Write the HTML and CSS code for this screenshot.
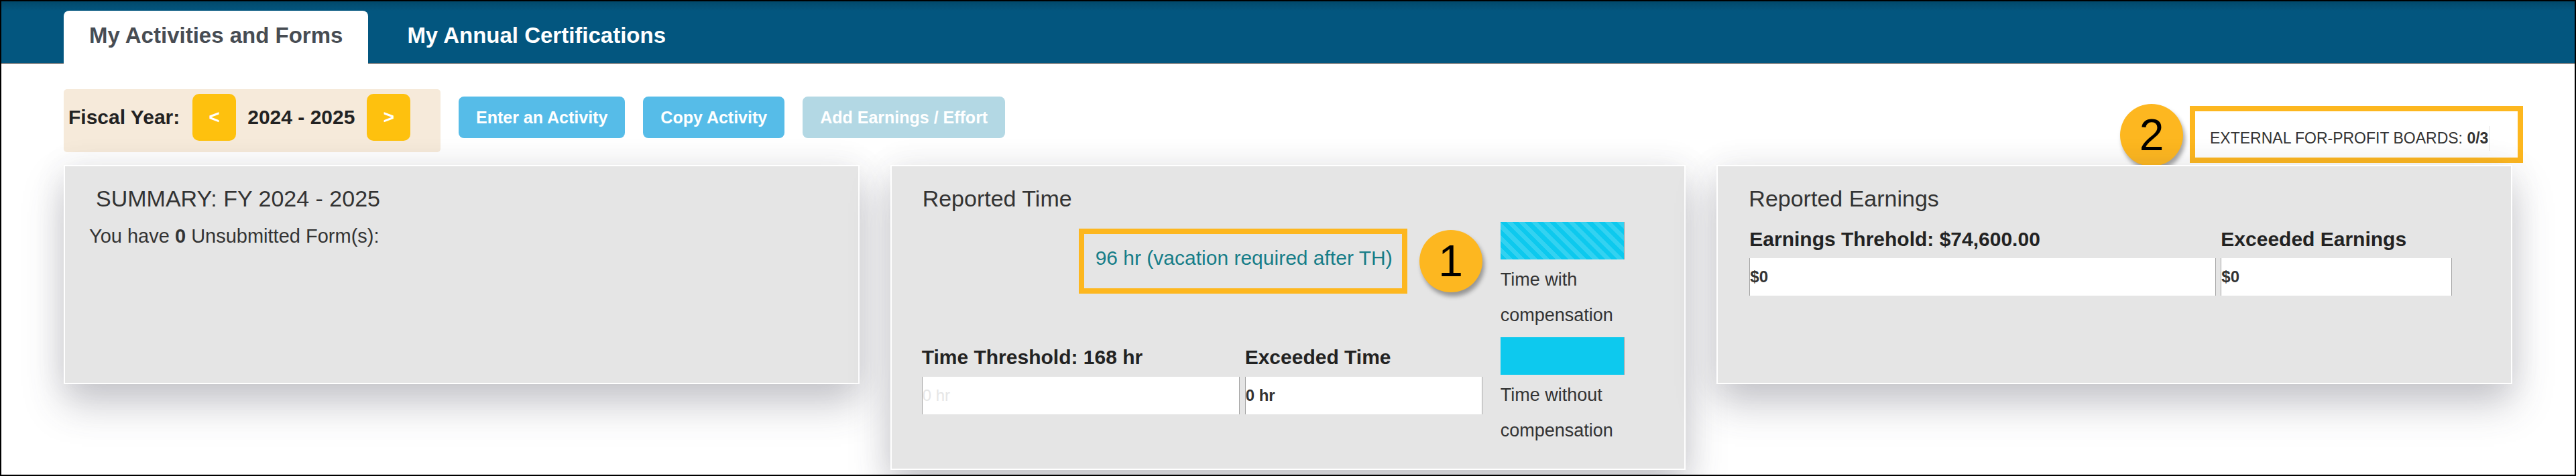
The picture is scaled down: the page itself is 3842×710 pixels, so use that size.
FILE: index.html
```html
<!DOCTYPE html>
<html lang="en">
<head>
<meta charset="utf-8">
<title>My Activities and Forms</title>
<link rel="stylesheet" href="styles.css">
</head>
<body>
<div class="frame">
  <header class="topbar">
    <nav class="tabs">
      <div class="tab active">My Activities and Forms</div>
      <div class="tab">My Annual Certifications</div>
    </nav>
  </header>
  <main class="content">
    <div class="toolbar">
      <div class="fiscal">
        <span class="fiscal-label">Fiscal Year:</span>
        <button class="nav-btn">&lt;</button>
        <span class="fiscal-year">2024 - 2025</span>
        <button class="nav-btn">&gt;</button>
      </div>
      <button class="action first">Enter an Activity</button>
      <button class="action">Copy Activity</button>
      <button class="action disabled">Add Earnings / Effort</button>
      <div class="boards-group">
        <div class="badge badge-top">2</div>
        <div class="highlight boards-highlight">
          <div class="boards">EXTERNAL FOR-PROFIT BOARDS: <b>0/3</b></div>
        </div>
      </div>
    </div>

    <div class="cards">
      <section class="card">
        <h2 class="card-title">SUMMARY: FY 2024 - 2025</h2>
        <p class="summary-note">You have <b>0</b> Unsubmitted Form(s):</p>
      </section>

      <section class="card">
        <h2 class="card-title">Reported Time</h2>
        <div class="time-body">
          <div class="time-main">
            <div class="time-highlight-row">
              <div class="highlight time-highlight"><span class="time-link">96 hr (vacation required after TH)</span></div>
              <div class="badge">1</div>
            </div>
            <div class="fields time-fields">
              <div class="field-label">Time Threshold: 168 hr</div>
              <div class="field-label">Exceeded Time</div>
              <div class="field-box muted">0 hr</div>
              <div class="field-box">0 hr</div>
            </div>
          </div>
          <div class="legend">
            <div class="swatch striped"></div>
            <div class="legend-label">Time with compensation</div>
            <div class="swatch solid"></div>
            <div class="legend-label">Time without compensation</div>
          </div>
        </div>
      </section>

      <section class="card">
        <h2 class="card-title">Reported Earnings</h2>
        <div class="fields earn-fields">
          <div class="field-label">Earnings Threhold: $74,600.00</div>
          <div class="field-label">Exceeded Earnings</div>
          <div class="field-box">$0</div>
          <div class="field-box">$0</div>
        </div>
      </section>
    </div>
  </main>
</div>
</body>
</html>
```

FILE: styles.css
```css
* { box-sizing: border-box; }

html, body {
  margin: 0;
  padding: 0;
  background: #fff;
}

body {
  font-family: "Liberation Sans", Arial, sans-serif;
  color: #333;
}

.frame {
  width: 3842px;
  height: 710px;
  border: 2px solid #000;
  overflow: hidden;
  background: #fff;
}

/* ---------- header / tabs ---------- */
.topbar {
  height: 93px;
  padding: 14px 0 0 93px;
  background: linear-gradient(#02496b 0, #03567f 14px, #03567f 100%);
  border-bottom: 1px solid #666;
}

.tabs {
  display: flex;
  gap: 20px;
  height: 79px;
}

.tab {
  height: 79px;
  padding: 20px 38px 0 38px;
  font-size: 33px;
  line-height: 33px;
  font-weight: bold;
  color: #fff;
  white-space: nowrap;
}

.tab.active {
  background: #fff;
  color: #474c53;
  border-radius: 8px 8px 0 0;
}

/* ---------- toolbar ---------- */
.content {
  padding: 38px 93px 0 93px;
}

.toolbar {
  display: flex;
  align-items: flex-start;
  height: 113px;
}

.fiscal {
  display: flex;
  align-items: center;
  width: 562px;
  height: 94px;
  padding: 7px 0 17px 7px;
  background: #f6eada;
  border-radius: 5px;
}

.fiscal-label,
.fiscal-year {
  font-size: 30px;
  font-weight: bold;
  color: #222;
  white-space: nowrap;
}

.fiscal-label { margin-right: 19px; }
.fiscal-year { margin: 0 18px 0 17px; }

.nav-btn {
  width: 65px;
  height: 70px;
  border: none;
  border-radius: 10px;
  background: #fec10e;
  color: #fff;
  font-family: "Liberation Sans", Arial, sans-serif;
  font-size: 28px;
  font-weight: bold;
  padding: 0;
}

.action {
  height: 62px;
  margin-top: 11px;
  margin-left: 27px;
  padding: 0 26px;
  border: none;
  border-radius: 8px;
  background: #56bce8;
  color: #fff;
  font-family: "Liberation Sans", Arial, sans-serif;
  font-size: 25px;
  font-weight: bold;
  white-space: nowrap;
}

.action.disabled {
  background: #b3d8e4;
}

.boards-group {
  display: flex;
  align-items: flex-start;
  gap: 10px;
  margin-left: auto;
  margin-right: -16px;
}

.badge {
  width: 94px;
  height: 93px;
  flex: none;
  border-radius: 50%;
  background: #fdb720;
  box-shadow: 3px 6px 6px rgba(0, 0, 0, 0.35);
  color: #000;
  font-size: 66px;
  line-height: 93px;
  text-align: center;
}

.badge-top { margin-top: 22px; }

.highlight {
  border: 8px solid #fdb71f;
}

.boards-highlight {
  width: 497px;
  height: 85px;
  margin-top: 25px;
  padding: 22px 0 10px 22px;
  background: #fff;
}

.boards {
  display: inline-block;
  height: 37px;
  padding-right: 1px;
  border-right: 1px solid #e4e4e4;
  font-size: 23px;
  line-height: 37px;
  color: #333;
  white-space: nowrap;
}

/* ---------- cards ---------- */
.cards {
  display: grid;
  grid-template-columns: repeat(3, 1fr);
  gap: 46px;
  align-items: start;
}

.card {
  min-height: 327px;
  padding: 29px 40px 30px 36px;
  background: #e5e5e5;
  border: 2px solid #fff;
  box-shadow: 0 30px 55px rgba(60, 60, 80, 0.28), 0 0 45px rgba(60, 60, 80, 0.08);
}

.card-title {
  margin: 0 0 0 10px;
  font-size: 34px;
  line-height: 39px;
  font-weight: normal;
  color: #333;
  white-space: nowrap;
}

.summary-note {
  margin: 20px 0 0 0;
  font-size: 29px;
  line-height: 33px;
  color: #333;
}

/* time card */
.time-body {
  display: flex;
  align-items: flex-start;
  margin: 15px 0 0 9px;
}

.time-main {
  width: 836px;
  flex: none;
}

.time-highlight-row {
  display: flex;
  justify-content: flex-end;
  align-items: center;
  gap: 18px;
  margin-top: 10px;
}

.time-highlight {
  width: 490px;
  height: 97px;
  padding: 19px 0 0 17px;
}

.time-link {
  font-size: 30px;
  line-height: 34px;
  color: #167d88;
  white-space: nowrap;
}

.fields {
  display: grid;
  row-gap: 12px;
}

.time-fields {
  grid-template-columns: 474px 354px;
  column-gap: 8px;
  margin-top: 78px;
}

.earn-fields {
  grid-template-columns: 696px 345px;
  column-gap: 7px;
  margin: 24px 0 0 11px;
  row-gap: 11px;
}

.field-label {
  font-size: 30px;
  line-height: 34px;
  font-weight: bold;
  color: #222;
  white-space: nowrap;
}

.field-box {
  height: 56px;
  background: #fff;
  border-left: 1px solid #a5a5a5;
  border-right: 1px solid #a5a5a5;
  font-size: 24px;
  line-height: 56px;
  font-weight: bold;
  color: #333;
}

.field-box.muted {
  color: #e6e6e6;
  font-weight: normal;
}

/* legend */
.legend {
  width: 185px;
  margin-left: 27px;
  flex: none;
}

.swatch {
  height: 56px;
  border-right: 1px solid #9aa3a6;
}

.swatch.striped {
  background: repeating-linear-gradient(45deg, #0dc9ee 0, #0dc9ee 6.5px, #33d2f1 6.5px, #33d2f1 13px);
}

.swatch.solid {
  background: #0dc9ee;
  margin-top: 6px;
}

.legend-label {
  padding-top: 4px;
  font-size: 27px;
  line-height: 53px;
  color: #333;
}
```
